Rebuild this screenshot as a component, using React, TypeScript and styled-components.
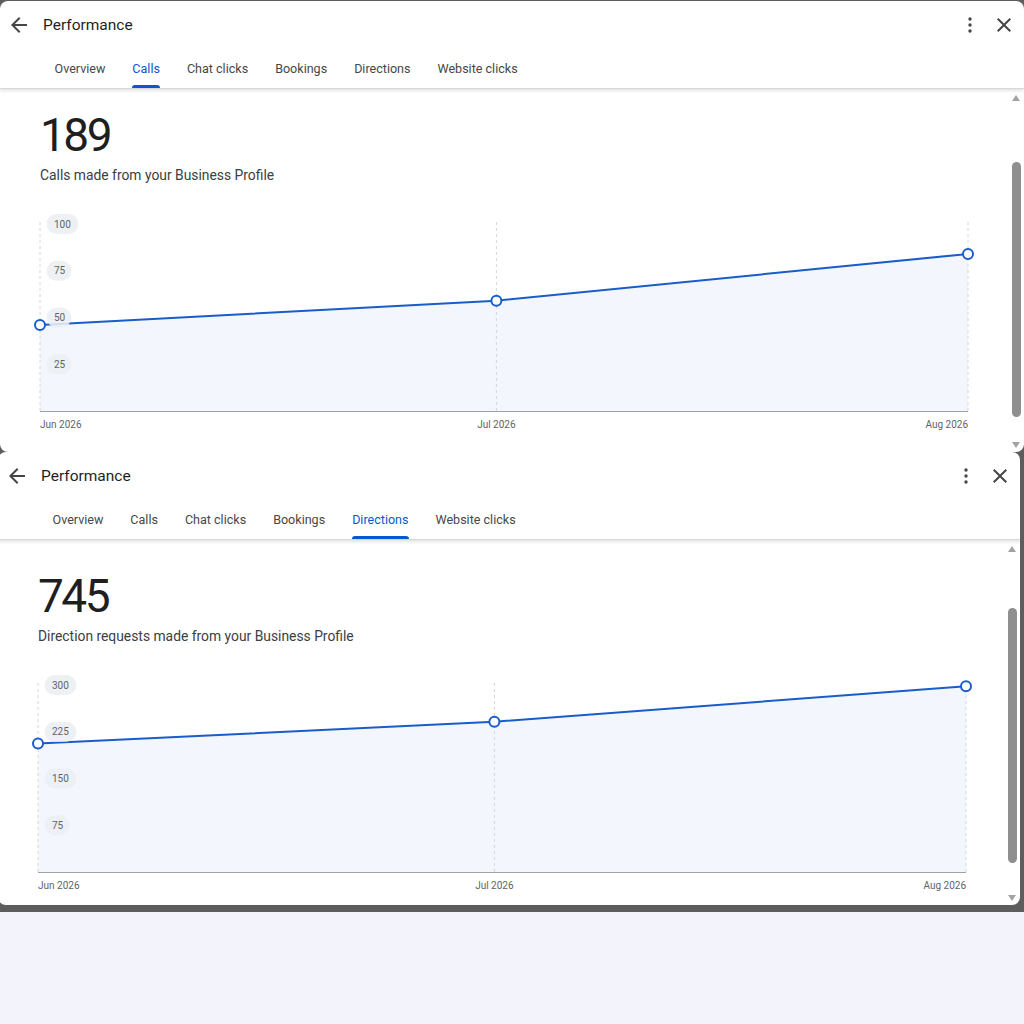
import React from "react";
import styled, { createGlobalStyle } from "styled-components";

const GlobalStyle = createGlobalStyle`
  html, body {
    margin: 0;
    padding: 0;
    background: #f3f4fb;
  }
  body {
    font-family: Roboto, "Noto Sans", Arial, sans-serif;
    color: #1f1f1f;
    overflow: hidden;
  }
`;

const FONT = `Roboto, "Noto Sans", Arial, sans-serif`;

/* ---------- frame ---------- */

const Stage = styled.div`
  background: #5d5d5d;
  padding: 1px 0 7px;
  display: flex;
  flex-direction: column;
  overflow: hidden;
`;

const Panel = styled.section<{ $shift: number; $height: number }>`
  background: #fff;
  height: ${(p) => p.$height}px;
  width: ${(p) => 1024 + p.$shift}px;
  margin-left: ${(p) => p.$shift}px;
  border-radius: 8px;
  display: flex;
  flex-direction: column;
  overflow: hidden;
`;

/* ---------- header ---------- */

const Header = styled.header`
  flex: none;
  border-bottom: 1px solid #d6d8dc;
  box-shadow: 0 2px 3px rgba(60, 64, 67, 0.14);
  position: relative;
  z-index: 1;
`;

const TitleBar = styled.div`
  height: 47px;
  display: flex;
  align-items: center;
  padding: 0 8px 0 7px;
`;

const IconButton = styled.button`
  width: 24px;
  height: 24px;
  padding: 0;
  border: 0;
  background: none;
  color: #444746;
  display: flex;
  align-items: center;
  justify-content: center;
  cursor: pointer;
`;

const Title = styled.h1`
  flex: 1;
  margin: 0 0 0 12px;
  font-family: ${FONT};
  font-size: 15.5px;
  font-weight: 400;
  color: #1f1f1f;
`;

const Actions = styled.div`
  display: flex;
  gap: 10px;
`;

const Tabs = styled.nav`
  height: 40px;
  display: flex;
  padding-left: 41px;
`;

const Tab = styled.button<{ $active?: boolean }>`
  position: relative;
  padding: 0 13.5px;
  border: 0;
  background: none;
  font-family: ${FONT};
  font-size: 12.55px;
  color: ${(p) => (p.$active ? "#0b57d0" : "#474747")};
  cursor: pointer;

  &::after {
    content: "";
    position: absolute;
    left: 13.5px;
    right: 13.5px;
    bottom: 0;
    height: 3px;
    border-radius: 3px 3px 0 0;
    background: ${(p) => (p.$active ? "#0b57d0" : "transparent")};
  }
`;

/* ---------- body ---------- */

const Body = styled.div`
  flex: 1;
  display: flex;
  min-height: 0;
`;

const Main = styled.div<{ $top: number }>`
  flex: 1;
  min-width: 0;
  padding: ${(p) => p.$top}px 0 0 40px;
`;

const Figure = styled.div`
  font-family: ${FONT};
  font-size: 46px;
  line-height: 46px;
  font-weight: 400;
  letter-spacing: -2.5px;
  color: #1f1f1f;
`;

const Caption = styled.p`
  margin: 7px 0 0;
  font-family: ${FONT};
  font-size: 13.85px;
  line-height: 20px;
  color: #3c4043;
`;

const ScrollTrack = styled.div`
  flex: none;
  width: 14px;
  margin-right: 1px;
  display: flex;
  flex-direction: column;
  align-items: center;
  padding: 6px 0 4px;
`;

const ArrowUp = styled.div`
  width: 0;
  height: 0;
  border-left: 4px solid transparent;
  border-right: 4px solid transparent;
  border-bottom: 6px solid #a3a3a3;
`;

const ArrowDown = styled.div`
  margin-top: auto;
  width: 0;
  height: 0;
  border-left: 4px solid transparent;
  border-right: 4px solid transparent;
  border-top: 6px solid #a3a3a3;
`;

const Thumb = styled.div<{ $offset: number }>`
  margin-top: ${(p) => p.$offset}px;
  width: 9px;
  height: 255px;
  border-radius: 5px;
  background: #8f8f8f;
`;

/* ---------- chart ---------- */

const ChartSvg = styled.svg`
  display: block;
  margin-top: 15px;
  overflow: visible;
`;

const W = 928;
const H = 236;
const TOP = 24;
const BASE = 211;
// day offsets of Jun 1, Jul 1, Aug 1
const DAYS = [0, 30, 61];
const MONTHS = ["Jun 2026", "Jul 2026", "Aug 2026"];

type ChartProps = { values: number[]; max: number; ticks: number[] };

const LineChart: React.FC<ChartProps> = ({ values, max, ticks }) => {
  const x = (i: number) => (DAYS[i] / 61) * W;
  const y = (v: number) => BASE - (v / max) * (BASE - TOP);
  const pts = values.map((v, i) => [x(i), y(v)] as const);
  const line = pts.map(([px, py], i) => `${i ? "L" : "M"}${px} ${py}`).join(" ");
  const area = `${line} L${W} ${BASE} L0 ${BASE} Z`;

  return (
    <ChartSvg width={W} height={H} viewBox={`0 0 ${W} ${H}`}>
      <path d={area} fill="#f3f7fd" />
      {DAYS.map((_, i) => (
        <line
          key={i}
          x1={x(i)}
          x2={x(i)}
          y1={TOP - 2}
          y2={BASE}
          stroke="#d3d6db"
          strokeDasharray="3 3"
          strokeWidth={1}
        />
      ))}
      <line x1={0} x2={W} y1={BASE + 0.5} y2={BASE + 0.5} stroke="#9ea1a6" strokeWidth={1} />
      <path d={line} fill="none" stroke="#1a5cc8" strokeWidth={2} />
      {ticks.map((t) => {
        const w = String(t).length >= 3 ? 32 : 25;
        return (
          <g key={t}>
            <rect x={6.5} y={y(t) - 10} width={w} height={20} rx={10} fill="rgba(236,239,243,0.88)" />
            <text
              x={14}
              y={y(t) + 3.5}
              fontFamily={FONT}
              fontSize={10}
              fill="#5f6368"
            >
              {t}
            </text>
          </g>
        );
      })}
      {pts.map(([px, py], i) => (
        <circle key={i} cx={px} cy={py} r={5} fill="#fff" stroke="#1a5cc8" strokeWidth={2} />
      ))}
      {MONTHS.map((m, i) => (
        <text
          key={m}
          x={x(i)}
          y={BASE + 16.5}
          textAnchor={i === 0 ? "start" : i === 2 ? "end" : "middle"}
          fontFamily={FONT}
          fontSize={10}
          fill="#5f6368"
        >
          {m}
        </text>
      ))}
    </ChartSvg>
  );
};

/* ---------- icons ---------- */

const BackIcon = () => (
  <svg width="24" height="24" viewBox="0 0 24 24" fill="currentColor">
    <path d="M20 11H7.83l5.59-5.59L12 4l-8 8 8 8 1.41-1.41L7.83 13H20v-2z" />
  </svg>
);

const MoreIcon = () => (
  <svg width="24" height="24" viewBox="0 0 24 24" fill="currentColor">
    <circle cx="12" cy="6" r="1.7" />
    <circle cx="12" cy="12" r="1.7" />
    <circle cx="12" cy="18" r="1.7" />
  </svg>
);

const CloseIcon = () => (
  <svg width="24" height="24" viewBox="0 0 24 24" fill="currentColor">
    <path d="M19 6.41L17.59 5 12 10.59 6.41 5 5 6.41 10.59 12 5 17.59 6.41 19 12 13.41 17.59 19 19 17.59 13.41 12z" />
  </svg>
);

/* ---------- performance card ---------- */

const TABS = ["Overview", "Calls", "Chat clicks", "Bookings", "Directions", "Website clicks"];

type CardProps = {
  active: string;
  total: number;
  caption: string;
  values: number[];
  max: number;
  ticks: number[];
  shift: number;
  height: number;
  contentTop: number;
  thumbTop: number;
};

const PerformanceCard: React.FC<CardProps> = (p) => (
  <Panel $shift={p.shift} $height={p.height}>
    <Header>
      <TitleBar>
        <IconButton aria-label="Back">
          <BackIcon />
        </IconButton>
        <Title>Performance</Title>
        <Actions>
          <IconButton aria-label="More options">
            <MoreIcon />
          </IconButton>
          <IconButton aria-label="Close">
            <CloseIcon />
          </IconButton>
        </Actions>
      </TitleBar>
      <Tabs>
        {TABS.map((t) => (
          <Tab key={t} $active={t === p.active}>
            {t}
          </Tab>
        ))}
      </Tabs>
    </Header>
    <Body>
      <Main $top={p.contentTop}>
        <Figure>{p.total}</Figure>
        <Caption>{p.caption}</Caption>
        <LineChart values={p.values} max={p.max} ticks={p.ticks} />
      </Main>
      <ScrollTrack>
        <ArrowUp />
        <Thumb $offset={p.thumbTop - 12} />
        <ArrowDown />
      </ScrollTrack>
    </Body>
  </Panel>
);

export default function App() {
  return (
    <>
      <GlobalStyle />
      <Stage>
        <PerformanceCard
          active="Calls"
          total={189}
          caption="Calls made from your Business Profile"
          values={[46, 59, 84]}
          max={100}
          ticks={[100, 75, 50, 25]}
          shift={0}
          height={451}
          contentTop={23}
          thumbTop={73}
        />
        <PerformanceCard
          active="Directions"
          total={745}
          caption="Direction requests made from your Business Profile"
          values={[206, 241, 298]}
          max={300}
          ticks={[300, 225, 150, 75]}
          shift={-2}
          height={453}
          contentTop={33}
          thumbTop={68}
        />
      </Stage>
    </>
  );
}
